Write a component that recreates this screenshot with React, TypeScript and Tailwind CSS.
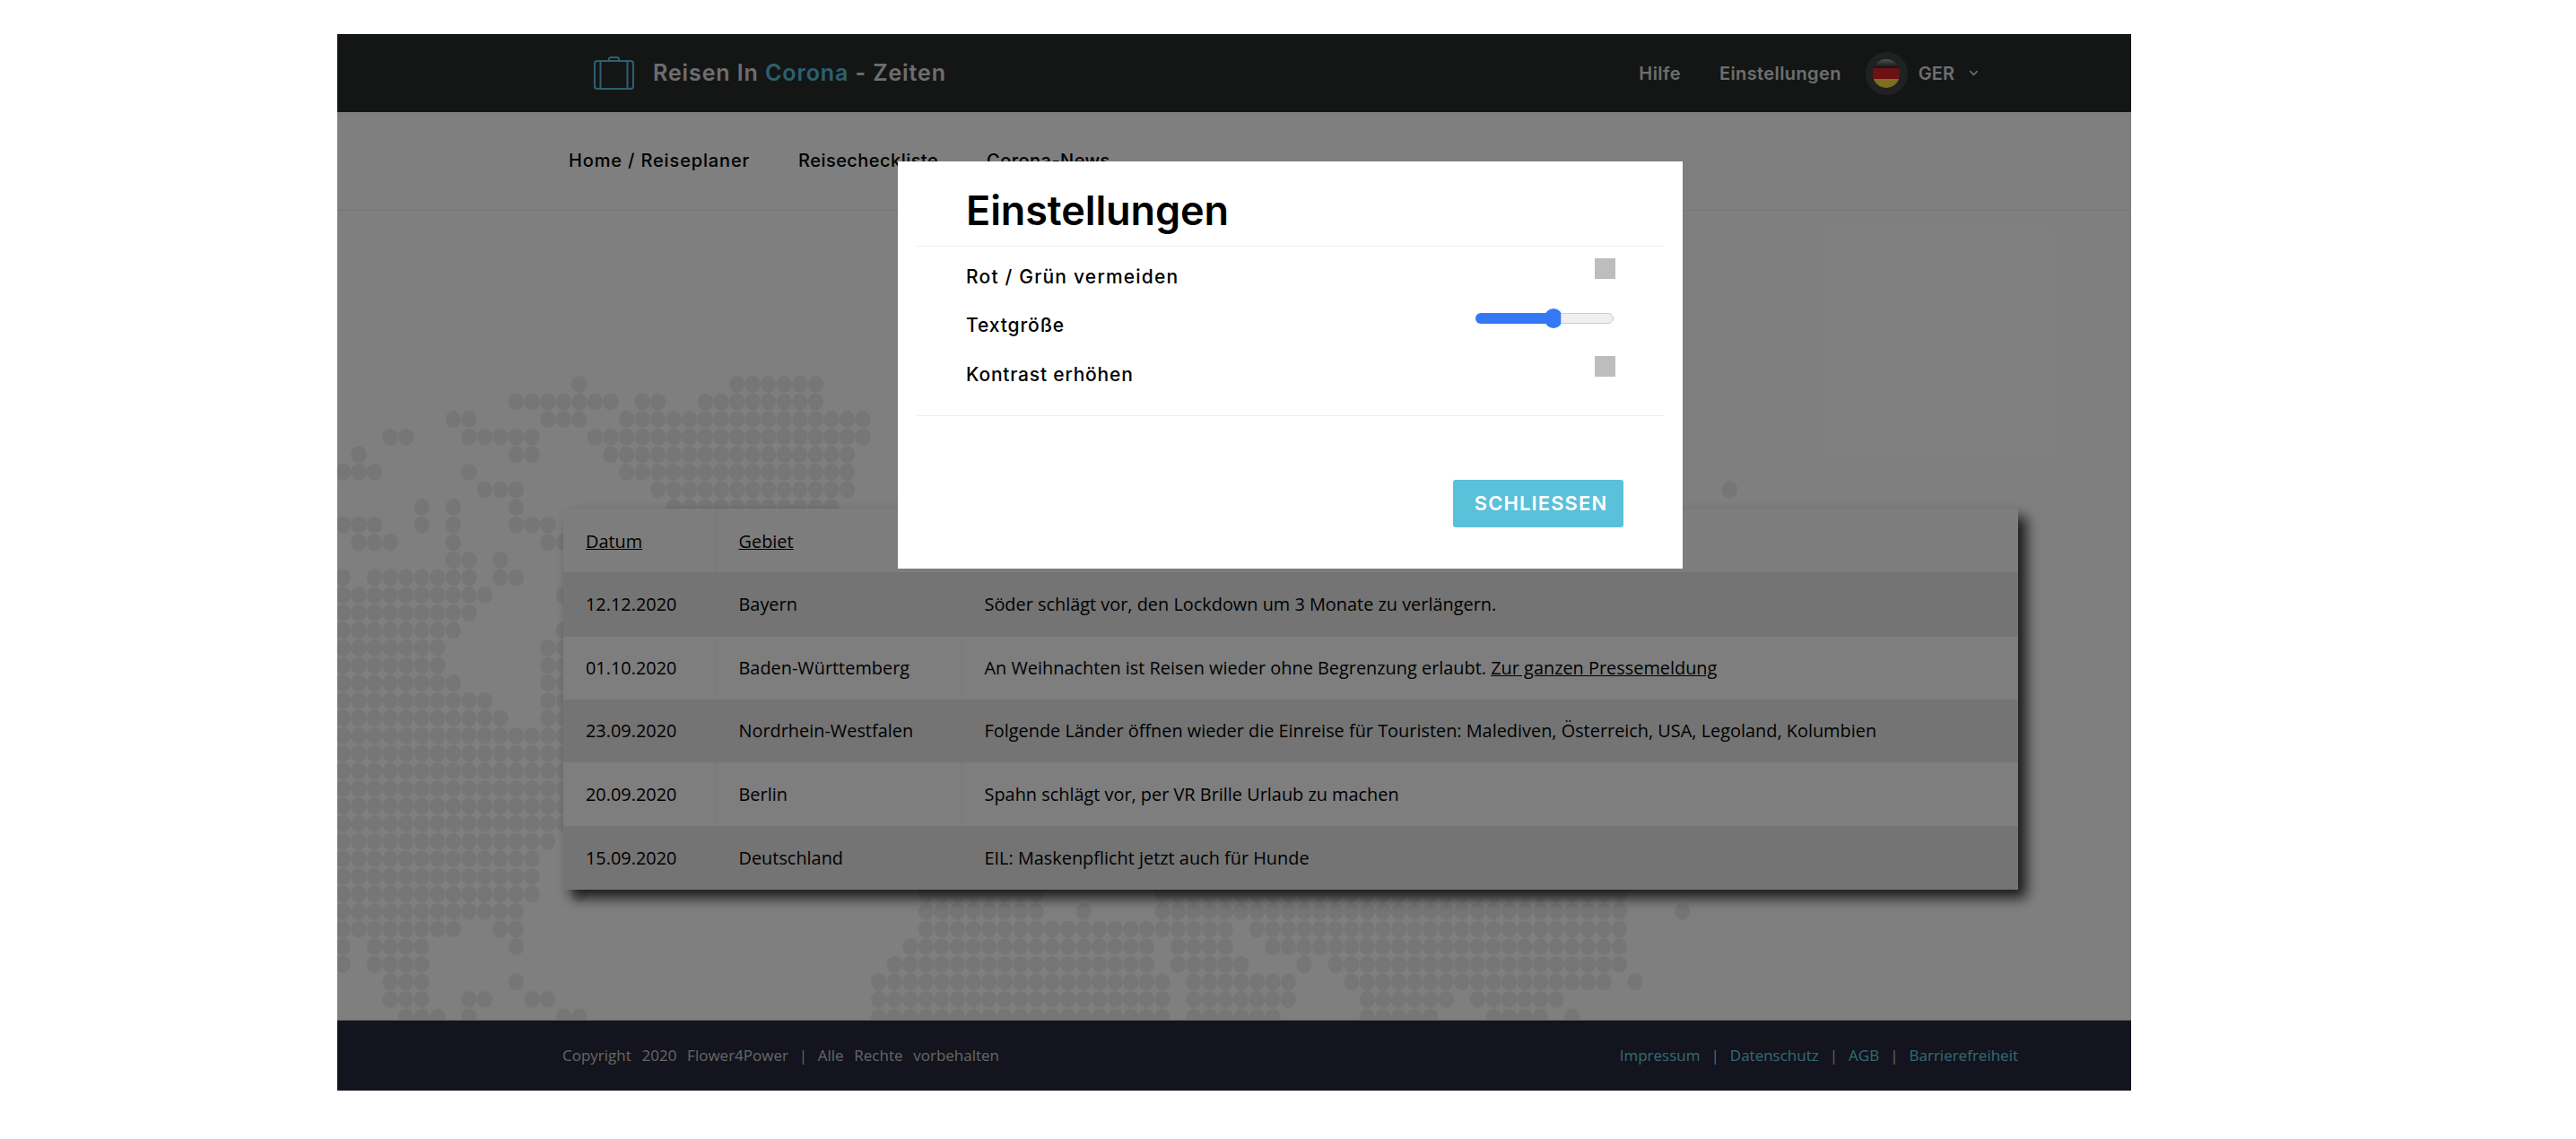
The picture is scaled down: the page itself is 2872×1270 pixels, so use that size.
import { ChevronDown } from "lucide-react";

// dotted world map: row index -> column ranges
const mapRows: Record<number, string> = {
  0: "15 25-30",
  1: "11-17 19-20 23-30",
  2: "7-8 13-15 18-33",
  3: "3-4 8-12 16-33",
  4: "1 11-12 17-32",
  5: "0-2 8 18-32",
  6: "9-11 20-32 88",
  7: "5 7 11 21-31",
  8: "0-2 5 7 11-13",
  9: "1-3 7 13-14",
  10: "7-8 10",
  11: "0 2-8 10-11",
  12: "0-9 14",
  13: "0-8",
  14: "0-7 14",
  15: "0-6 13-14",
  16: "0-6 13-14",
  17: "0-7 13-14",
  18: "0-9 13-14",
  19: "0-10 13-14",
  20: "0-14",
  21: "0-14",
  22: "0-14",
  23: "0-14",
  24: "0-14",
  25: "0-14",
  26: "0-13",
  27: "0-12",
  28: "0-12",
  29: "0-12 15 37-44 52-81",
  30: "0-11 37-44 47 52-81 85",
  31: "0-7 10-11 37-56 58-81",
  32: "0 2-5 11 36-51 53-56 59-81",
  33: "0 2-5 35-51 53-57 61 63-81",
  34: "3-5 11 34-52 54-60 64-80 82",
  35: "3-5 8-9 12-13 34-52 54-60 65-70 72-77",
  36: "4-6 8 14-15 34-52 54-59 65-69 73-76 78",
};

function expandRow(spec: string) {
  const cols: number[] = [];
  for (const part of spec.split(" ")) {
    const [from, to] = part.split("-").map(Number);
    for (let c = from; c <= (to ?? from); c++) cols.push(c);
  }
  return cols;
}

function DotMap() {
  return (
    <svg className="absolute left-0 top-0" width="2000" height="902" viewBox="0 0 2000 902">
      {Object.entries(mapRows).map(([row, spec]) =>
        expandRow(spec).map((col) => (
          <ellipse
            key={`${row}-${col}`}
            cx={6.3 + col * 17.57}
            cy={193.4 + Number(row) * 19.6}
            rx="8.7"
            ry="9.5"
            fill="#ececec"
          />
        ))
      )}
    </svg>
  );
}

function SuitcaseIcon() {
  return (
    <svg width="45" height="37" viewBox="0 0 45 37" fill="none" stroke="#5bc0de" strokeWidth="2">
      <rect x="1" y="5" width="43" height="31" rx="3" />
      <path d="M7.5 5v31M37.5 5v31" />
      <path d="M17 5V3a2 2 0 0 1 2-2h7a2 2 0 0 1 2 2v2" />
    </svg>
  );
}

function Flag() {
  return (
    <div className="w-[47px] h-[48px] rounded-full bg-[#414444] flex items-center justify-center">
      <div className="w-[30px] h-[32px] rounded-full overflow-hidden flex flex-col">
        <div className="h-[10px] bg-linear-to-b from-[#aaaaaa] to-[#222222]" />
        <div className="h-[12px] bg-[#dd2222]" />
        <div className="flex-1 bg-[#ffdd44]" />
      </div>
    </div>
  );
}

const rows = [
  { date: "12.12.2020", area: "Bayern", text: "Söder schlägt vor, den Lockdown um 3 Monate zu verlängern.", h: "h-[72px]" },
  { date: "01.10.2020", area: "Baden-Württemberg", text: "An Weihnachten ist Reisen wieder ohne Begrenzung erlaubt. ", link: "Zur ganzen Pressemeldung", h: "h-[70px]" },
  { date: "23.09.2020", area: "Nordrhein-Westfalen", text: "Folgende Länder öffnen wieder die Einreise für Touristen: Malediven, Österreich, USA, Legoland, Kolumbien", h: "h-[70px]" },
  { date: "20.09.2020", area: "Berlin", text: "Spahn schlägt vor, per VR Brille Urlaub zu machen", h: "h-[71px]" },
  { date: "15.09.2020", area: "Deutschland", text: "EIL: Maskenpflicht jetzt auch für Hunde", h: "h-[71px]" },
];

const footerLinks = ["Impressum", "Datenschutz", "AGB", "Barrierefreiheit"];

function SettingsModal() {
  return (
    <div className="absolute left-[625px] top-[142px] w-[875px] h-[454px] bg-white px-[21px] text-black font-['Inter',sans-serif]">
      <div className="h-[95px] border-b border-[#eeeeee] pl-[55px] pt-[30px]">
        <h2 className="text-[45px] leading-[50px] font-semibold tracking-[-0.1px]">Einstellungen</h2>
      </div>
      <div className="h-[189px] border-b border-[#eeeeee] pl-[55px] pr-[54px] pt-[7px]">
        <div className="h-[54px] flex justify-between">
          <span className="text-[21px] font-medium leading-[54px] tracking-[1.2px]">Rot / Grün vermeiden</span>
          <div className="w-[23px] h-[23px] mt-[6px] bg-[#bdbdbd]" />
        </div>
        <div className="h-[55px] flex justify-between">
          <span className="text-[21px] font-medium leading-[54px] tracking-[0.9px]">Textgröße</span>
          <div className="w-[154px] h-[22px] mt-[8px] mr-[2px] flex items-center">
            <div className="w-[79px] h-[12px] rounded-l-full bg-[#3478f6]" />
            <div className="w-[20px] h-[22px] rounded-full bg-[#3478f6] shrink-0 -ml-[2px]" />
            <div className="flex-1 h-[12px] -ml-[2px] rounded-r-full bg-[#efefef] border border-[#cccccc]" />
          </div>
        </div>
        <div className="h-[54px] flex justify-between">
          <span className="text-[21px] font-medium leading-[54px] tracking-[0.8px]">Kontrast erhöhen</span>
          <div className="w-[23px] h-[23px] mt-[6px] bg-[#bdbdbd]" />
        </div>
      </div>
      <div className="flex justify-end pr-[45px] pt-[71px]">
        <button className="w-[190px] h-[53px] pl-[6px] rounded-[3px] bg-[#5bc0d9] text-white text-[22px] font-semibold tracking-[1.1px]">
          SCHLIESSEN
        </button>
      </div>
    </div>
  );
}

export default function App() {
  return (
    <div className="h-screen overflow-hidden bg-white pt-[38px] pl-[376px]">
      <div className="relative w-[2000px] h-[1178px]">
        {/* Header */}
        <header className="h-[87px] bg-[#282c2c] flex items-center justify-between pl-[286px] pr-[168px] font-['Inter',sans-serif] text-[#dddddd]">
          <div className="flex items-center gap-[21px]">
            <SuitcaseIcon />
            <span className="text-[25px] font-semibold tracking-[0.9px]">
              Reisen In <span className="text-[#5bc0de]">Corona</span> - Zeiten
            </span>
          </div>
          <div className="flex items-center text-[20px] font-semibold">
            <span className="tracking-[0.4px]">Hilfe</span>
            <span className="ml-[43px] tracking-[0.4px]">Einstellungen</span>
            <div className="ml-[27px]">
              <Flag />
            </div>
            <span className="ml-[12px]">GER</span>
            <ChevronDown className="ml-[14px] w-[15px] h-[15px]" strokeWidth={2.5} />
          </div>
        </header>

        {/* Subnav */}
        <nav className="h-[110px] bg-white border-b border-[#eeeeee] flex items-center pl-[258px] pb-[2px] text-black font-['Inter',sans-serif] text-[20px] font-medium">
          <span className="tracking-[0.85px]">Home / Reiseplaner</span>
          <span className="ml-[54px] tracking-[0.45px]">Reisecheckliste</span>
          <span className="ml-[54px] tracking-[0.45px]">Corona-News</span>
        </nav>

        {/* Main with map and news table */}
        <main className="relative h-[902px] bg-white overflow-hidden pl-[252px] pt-[332px]">
          <DotMap />
          <table className="relative w-[1622px] table-fixed border-collapse font-['Open_Sans',sans-serif] text-[19.9px] text-black shadow-[9px_9px_14px_rgba(0,0,0,0.8)]">
            <thead>
              <tr className="h-[71px] bg-[#fbfbfb]">
                <th className="w-[170px] px-[25px] pt-[2px] text-left font-normal border-r border-[#eeeeee]">
                  <span className="underline">Datum</span>
                </th>
                <th className="w-[274px] px-[25px] pt-[2px] text-left font-normal border-r border-[#eeeeee]">
                  <span className="underline">Gebiet</span>
                </th>
                <th />
              </tr>
            </thead>
            <tbody>
              {rows.map((row, i) => (
                <tr key={row.date} className={`${row.h} ${i % 2 === 0 ? "bg-[#e8e8e8]" : "bg-[#fdfdfd]"}`}>
                  <td className={`px-[25px] border-r ${i % 2 === 0 ? "border-[#e8e8e8]" : "border-[#eeeeee]"}`}>{row.date}</td>
                  <td className={`px-[25px] border-r ${i % 2 === 0 ? "border-[#e8e8e8]" : "border-[#eeeeee]"}`}>{row.area}</td>
                  <td className="px-[25px]">
                    {row.text}
                    {row.link && <span className="underline">{row.link}</span>}
                  </td>
                </tr>
              ))}
            </tbody>
          </table>
        </main>

        {/* Footer */}
        <footer className="h-[79px] bg-[#26283a] border-t border-[#cccccc] flex items-center justify-between pl-[251px] pr-[126px] font-['Open_Sans',sans-serif] text-[17px]">
          <span className="text-[#cccccc] [word-spacing:7.3px]">Copyright 2020 Flower4Power | Alle Rechte vorbehalten</span>
          <div className="flex items-center">
            {footerLinks.map((link, i) => (
              <span key={link} className="flex items-center">
                {i > 0 && <span className="mx-[12px] text-[#cccccc]">|</span>}
                <span className="text-[#66d4e8]">{link}</span>
              </span>
            ))}
          </div>
        </footer>

        {/* Backdrop + dialog */}
        <div className="absolute inset-0 bg-black/50" />
        <SettingsModal />
      </div>
    </div>
  );
}
